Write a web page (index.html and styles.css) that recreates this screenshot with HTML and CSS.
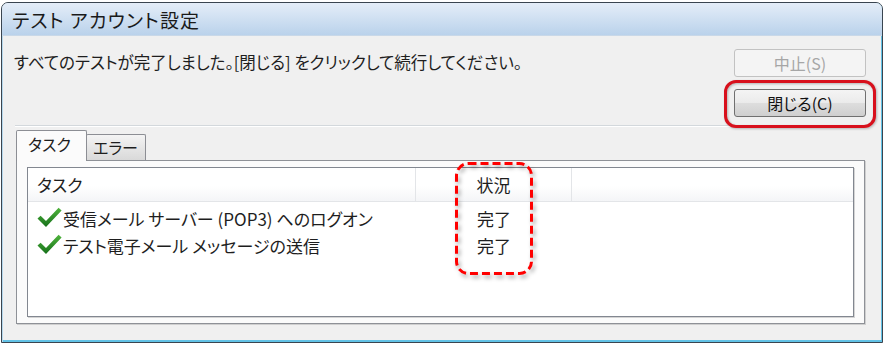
FILE: index.html
```html
<!DOCTYPE html>
<html lang="ja">
<head>
  <meta charset="UTF-8" />
  <title>テスト アカウント設定</title>
  <link rel="stylesheet" href="styles.css">
</head>
<body>
  <div class="window">
    <div class="titlebar">テスト アカウント設定</div>

    <div class="top">
      <p class="message">すべてのテストが完了しました。[閉じる] をクリックして続行してください。</p>
      <div class="actions">
        <button class="button" disabled>中止(S)</button>
        <span class="callout">
          <button class="button">閉じる(C)</button>
        </span>
      </div>
    </div>

    <div class="separator"></div>

    <div class="tabs">
      <div class="tab active">タスク</div>
      <div class="tab">エラー</div>
    </div>

    <div class="panel">
      <div class="list">
        <div class="list-head">
          <div class="col col-task">タスク</div>
          <div class="col col-status">状況</div>
          <div class="col"></div>
        </div>
        <div class="row">
          <div class="col col-task">
            <svg class="check" viewBox="0 0 25 20"><use href="#tick"/></svg>
            <span>受信メール サーバー (POP3) へのログオン</span>
          </div>
          <div class="col col-status">完了</div>
        </div>
        <div class="row">
          <div class="col col-task">
            <svg class="check" viewBox="0 0 25 20"><use href="#tick"/></svg>
            <span>テスト電子メール メッセージの送信</span>
          </div>
          <div class="col col-status">完了</div>
        </div>
      </div>

      <!-- annotation around the status column -->
      <svg class="mark" width="80" height="115" viewBox="0 0 80 115">
        <rect x="1.5" y="1.5" width="75" height="110" rx="12" fill="none" stroke="#ff0000" stroke-width="3" stroke-dasharray="8 4"/>
      </svg>
    </div>
  </div>

  <svg width="0" height="0" style="position:absolute">
    <defs>
      <linearGradient id="green" x1="0" y1="0" x2="0" y2="1">
        <stop offset="0" stop-color="#4fb43c"/>
        <stop offset="1" stop-color="#16701a"/>
      </linearGradient>
      <path id="tick" d="M0.5 11.5 L3.6 8.8 L9 14 L21.6 0.8 L24.6 3.6 L9 20 Z" fill="url(#green)"/>
    </defs>
  </svg>
</body>
</html>
```

FILE: styles.css
```css
* {
  margin: 0;
  padding: 0;
  box-sizing: border-box;
}

body {
  background: #fff;
  font-family: "Noto Sans CJK JP", "Noto Sans", sans-serif;
  font-feature-settings: "palt";
  color: #1e1e1e;
}

.window {
  margin: 2px 0 0 1px;
  width: 882px;
  height: 341px;
  border: 1px solid #3a4550;
  border-radius: 7px 7px 0 0;
  background: #f0f0f0;
  box-shadow: inset 1px 0 0 #b6d8ec, inset -1px 0 0 #62c2e6, inset 0 -2px 0 #62c2e6;
  overflow: hidden;
  display: flex;
  flex-direction: column;
}

.titlebar {
  height: 33px;
  flex: none;
  padding-left: 10px;
  font-size: 19px;
  letter-spacing: 1.2px;
  line-height: 33px;
  color: #1a1a1a;
  background: linear-gradient(#e4edf8, #bad2eb);
  border-bottom: 1px solid #c9d8e8;
}

.top {
  height: 89px;
  flex: none;
  display: flex;
  justify-content: space-between;
  padding: 13px 16px 0 12px;
}

.message {
  margin-top: 3px;
  font-size: 16.5px;
  line-height: 20px;
}

.actions {
  width: 132px;
  display: flex;
  flex-direction: column;
  gap: 12px;
}

.button {
  width: 132px;
  height: 28px;
  border: 1px solid #707070;
  border-radius: 3px;
  background: linear-gradient(#f4f4f4 0%, #ebebeb 48%, #dddddd 52%, #cfcfcf 100%);
  font-family: inherit;
  font-feature-settings: "palt";
  font-size: 16px;
  color: #111;
}

.button:disabled {
  color: #a6a6a6;
  border-color: #c2c2c2;
  background: #f4f4f4;
}

.callout {
  position: relative;
  display: block;
  height: 28px;
}

.callout::after {
  content: "";
  position: absolute;
  top: -9px;
  bottom: -11px;
  left: -10px;
  right: -10px;
  border: 3px solid #d8101c;
  border-radius: 12px;
  filter: drop-shadow(1px 1px 1px rgba(0, 0, 0, 0.25));
}

.separator {
  height: 2px;
  flex: none;
  margin: 0 15px 0 13px;
  border-top: 1px solid #d3d8dc;
  border-bottom: 1px solid #fff;
}

.tabs {
  height: 30px;
  flex: none;
  margin-top: 3px;
  padding-left: 14px;
  display: flex;
  align-items: flex-end;
}

.tab {
  height: 26px;
  padding: 2px 0 0 6px;
  width: 60px;
  margin-left: -1px;
  border: 1px solid #8c8e94;
  border-bottom: none;
  border-radius: 2px 2px 0 0;
  background: linear-gradient(#f4f4f4, #e6e6e6 50%, #d9d9d9);
  font-size: 16px;
  line-height: 20px;
}

.tab.active {
  height: 31px;
  width: 71px;
  margin-left: 0;
  margin-bottom: -1px;
  padding: 3px 0 0 11px;
  background: #fbfbfb;
  position: relative;
  z-index: 1;
}

.panel {
  position: relative;
  height: 164px;
  flex: none;
  margin: 0 17px 0 14px;
  padding: 6px 10px;
  border: 1px solid #8e9197;
  background: #fbfbfb;
  box-shadow: 1px 1px 0 #cfcfcf;
}

.list {
  height: 150px;
  border: 1px solid #828790;
  background: #fff;
  box-shadow: 1px 1px 0 #d4d4d4;
  font-size: 17px;
}

.list-head,
.row {
  display: grid;
  grid-template-columns: 388px 156px 1fr;
}

.list-head {
  height: 34px;
  line-height: 33px;
  border-bottom: 1px solid #e3e5e8;
  background: linear-gradient(#ffffff 55%, #f4f5f7);
}

.list-head .col {
  border-right: 1px solid #e3e5e8;
}

.list-head .col:last-child {
  border-right: none;
}

.col-task {
  padding-left: 9px;
  display: flex;
  align-items: center;
  gap: 1px;
}

.col-status {
  text-align: center;
}

.list-head + .row {
  margin-top: 3px;
}

.row {
  height: 27px;
  line-height: 27px;
}

.check {
  width: 25px;
  height: 20px;
  flex: none;
  margin-top: -4px;
}

.mark {
  position: absolute;
  left: 438px;
  top: 1px;
  filter: drop-shadow(2px 3px 2px rgba(0, 0, 0, 0.35));
}
```
